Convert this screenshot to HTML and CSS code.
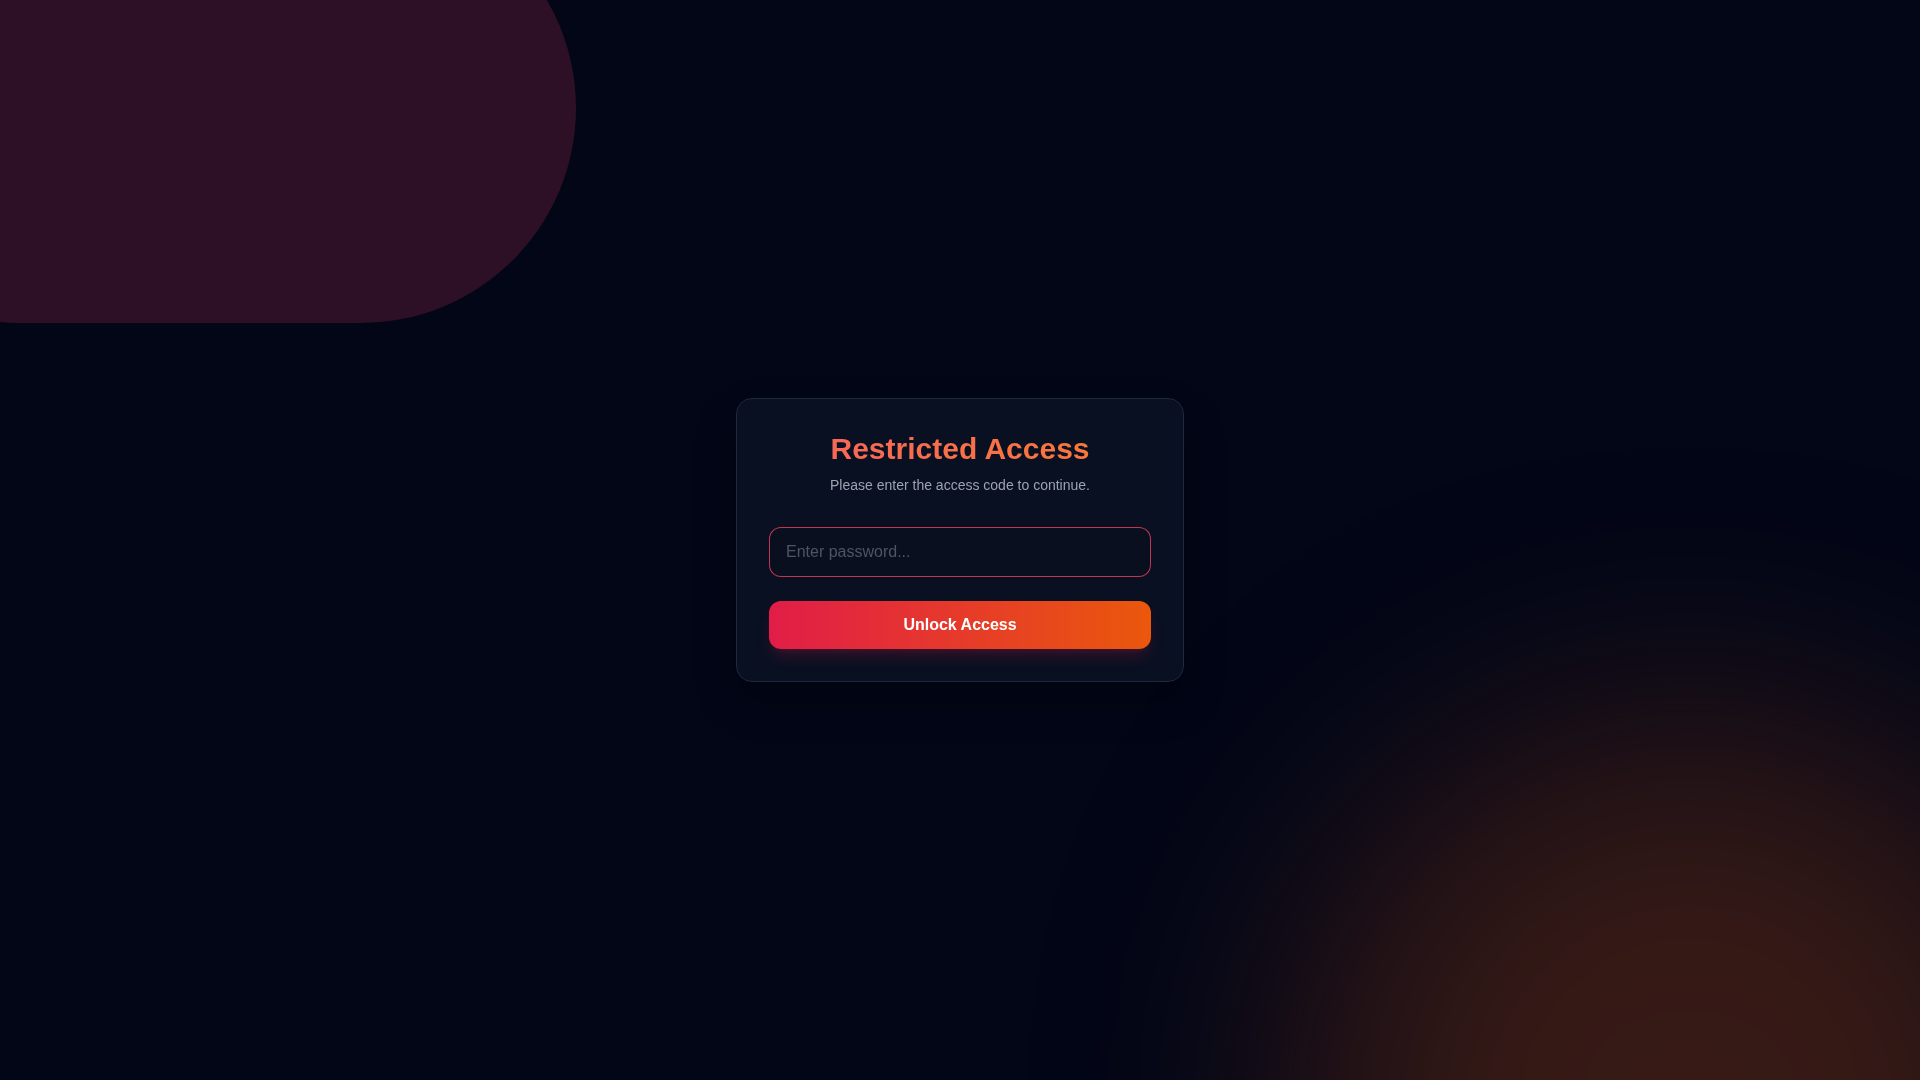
FILE: index.html
```html
<!DOCTYPE html>
<html lang="en">
<head>
  <meta charset="UTF-8">
  <title>Restricted Access</title>
  <link rel="stylesheet" href="styles.css">
</head>
<body>
  <!-- background shapes -->
  <div class="backdrop">
    <div class="blob blob-pink"></div>
    <div class="blob blob-orange"></div>
  </div>

  <main class="page">
    <form class="card" onsubmit="return false;">
      <h1 class="title">Restricted Access</h1>
      <p class="subtitle">Please enter the access code to continue.</p>

      <input type="password" class="password" placeholder="Enter password..." autocomplete="off">

      <button type="submit" class="unlock-btn">Unlock Access</button>
    </form>
  </main>
</body>
</html>
```

FILE: styles.css
```css
* {
  box-sizing: border-box;
}

html, body {
  height: 100%;
}

body {
  margin: 0;
  font-family: "Liberation Sans", Arial, sans-serif;
  background: #020617;
  color: #fff;
  overflow: hidden;
}

.backdrop {
  position: fixed;
  inset: 0;
  overflow: hidden;
  pointer-events: none;
}

.blob {
  position: absolute;
}

.blob-pink {
  left: -195px;
  top: -107px;
  width: 771px;
  height: 430px;
  border-radius: 215px;
  background: #2e1026;
}

.blob-orange {
  left: 1300px;
  top: 720px;
  width: 780px;
  height: 780px;
  border-radius: 50%;
  background: #4a2216;
  opacity: 0.75;
  filter: blur(130px);
}

.page {
  position: relative;
  height: 100%;
  display: flex;
  align-items: center;
  justify-content: center;
}

.card {
  width: 448px;
  padding: 32px;
  background: rgba(15, 23, 42, 0.6);
  border: 1px solid #1e293b;
  border-radius: 16px;
  box-shadow: 0 20px 40px rgba(0, 0, 0, 0.3);
}

.title {
  margin: 0 0 8px;
  text-align: center;
  font-size: 30px;
  line-height: 36px;
  font-weight: bold;
  background: linear-gradient(90deg, #f6655e, #fb7a34);
  -webkit-background-clip: text;
  background-clip: text;
  color: transparent;
}

.subtitle {
  margin: 0 0 32px;
  text-align: center;
  font-size: 14px;
  line-height: 20px;
  color: #9ca3af;
}

.password {
  display: block;
  width: 100%;
  padding: 12px 16px;
  font-family: inherit;
  font-size: 16px;
  line-height: 24px;
  color: #e2e8f0;
  background: #0a0f1f;
  border: 1px solid rgba(244, 63, 94, 0.8);
  border-radius: 12px;
  outline: none;
}

.password::placeholder {
  color: #4b5563;
}

.unlock-btn {
  display: block;
  width: 100%;
  margin-top: 24px;
  padding: 12px 16px;
  font-family: inherit;
  font-size: 16px;
  line-height: 24px;
  font-weight: bold;
  color: #fff;
  background: linear-gradient(90deg, #e11d48, #ea580c);
  border: none;
  border-radius: 12px;
  box-shadow: 0 10px 15px -3px rgba(225, 29, 72, 0.2), 0 4px 6px -4px rgba(225, 29, 72, 0.2);
  cursor: pointer;
}
```
